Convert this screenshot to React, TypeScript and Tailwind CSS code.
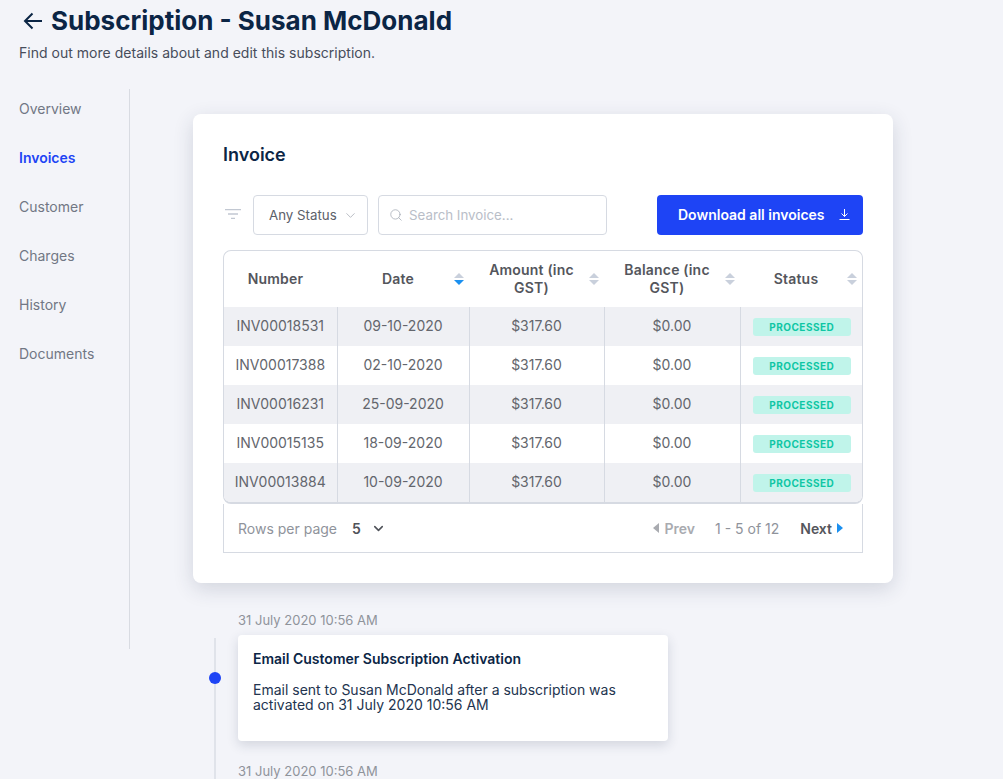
import { ChevronDown, Search } from "lucide-react";

const navItems = ["Overview", "Invoices", "Customer", "Charges", "History", "Documents"];

const invoices = [
  { number: "INV00018531", date: "09-10-2020" },
  { number: "INV00017388", date: "02-10-2020" },
  { number: "INV00016231", date: "25-09-2020" },
  { number: "INV00015135", date: "18-09-2020" },
  { number: "INV00013884", date: "10-09-2020" },
];

function SortIcon({ active }: { active?: boolean }) {
  return (
    <svg width="10" height="12" viewBox="0 0 10 12" className="absolute right-[5px] top-1/2 -translate-y-1/2">
      <path d="M5 0 L10 5 H0 Z" fill="#c9d0dc" />
      <path d="M0 7 H10 L5 12 Z" fill={active ? "#1b90f0" : "#c9d0dc"} />
    </svg>
  );
}

function HeaderCell({ label, sorted, sortable = true, w }: { label: React.ReactNode; sorted?: boolean; sortable?: boolean; w: string }) {
  return (
    <th className={`relative ${w} p-0 pr-[10px] text-center text-[14px] leading-[18px] tracking-[0.2px] font-semibold text-[#54565c]`}>
      {label}
      {sortable && <SortIcon active={sorted} />}
    </th>
  );
}

export default function App() {
  return (
    <div className="h-[779px] overflow-hidden bg-[#f3f4f9] font-['Inter',sans-serif]">
      <div className="pl-[19px] pt-[5px]">
        <div className="flex items-center h-[32px]">
          <svg width="19" height="18" viewBox="0 0 19 18" className="ml-[4px] mr-[9px]" fill="none" stroke="#0b2545" strokeWidth="2">
            <path d="M2 9 H19 M9.5 1.5 L2 9 L9.5 16.5" />
          </svg>
          <h1 className="text-[26px] leading-[32px] font-bold text-[#0b2545]">Subscription - Susan McDonald</h1>
        </div>
        <p className="mt-[7px] text-[14px] leading-[18px] tracking-[0.02px] text-[#474d5b]">Find out more details about and edit this subscription.</p>
      </div>

      <div className="flex mt-[27px]">
        <nav className="w-[130px] h-[560px] shrink-0 border-r border-[#d8dbe2] pl-[19px] pt-[11px] flex flex-col gap-[31px]">
          {navItems.map((item) => (
            <a key={item} className={`text-[14px] leading-[18px] ${item === "Invoices" ? "font-semibold text-[#1e44f5]" : "text-[#717784]"}`}>
              {item}
            </a>
          ))}
        </nav>

        <div className="pl-[63px] pt-[25px]">
          <section className="w-[700px] h-[469px] bg-white rounded-[8px] shadow-[0_6px_20px_rgba(40,50,80,0.16)] px-[30px] pt-[30px]">
            <h2 className="text-[18px] leading-[22px] font-semibold text-[#0b2545]">Invoice</h2>

            <div className="flex items-center mt-[29px] h-[40px]">
              <svg width="16" height="10" viewBox="0 0 16 10" className="ml-[2px] mr-[12px] mb-[2px]" fill="none" stroke="#c2c8d2" strokeWidth="1.3">
                <path d="M0 0.7 H16 M3 5 H13 M6 9.3 H10" />
              </svg>
              <div className="w-[115px] h-[40px] border border-[#d6dae2] rounded-[4px] flex items-center pl-[15px] text-[13.3px] text-[#5c6069]">
                <span className="pt-[1px]">Any Status</span>
                <ChevronDown size={15} strokeWidth={1.1} className="ml-[6px] text-[#9aa0ab]" />
              </div>
              <div className="ml-[10px] w-[229px] h-[40px] border border-[#d6dae2] rounded-[4px] flex items-center pl-[10px] text-[13.3px] text-[#b9bec8]">
                <Search size={14} strokeWidth={1.3} className="mr-[6px] text-[#a3a9b4]" />
                <span className="pt-[1px]">Search Invoice...</span>
              </div>
              <button className="ml-auto w-[206px] h-[40px] pl-[21px] pb-[1px] bg-[#1e44f5] rounded-[4px] flex items-center text-white text-[14px] font-semibold">
                Download all invoices
                <svg width="11" height="11" viewBox="0 0 11 11" className="ml-[14px]" fill="none" stroke="white" strokeWidth="1">
                  <path d="M5.5 0 V7.5 M2.5 4.5 L5.5 7.5 L8.5 4.5 M0.5 10.5 H10.5" />
                </svg>
              </button>
            </div>

            <div className="mt-[15px] border border-b-2 border-[#d6dae2] rounded-[8px] overflow-hidden">
              <table className="w-[638px] table-fixed border-collapse">
                <thead>
                  <tr className="h-[56px]">
                    <HeaderCell w="w-[113px]" label="Number" sortable={false} />
                    <HeaderCell w="w-[132px]" label="Date" sorted />
                    <HeaderCell w="w-[135px]" label={<>Amount (inc<br />GST)</>} />
                    <HeaderCell w="w-[136px]" label={<>Balance (inc<br />GST)</>} />
                    <HeaderCell w="w-[122px]" label="Status" />
                  </tr>
                </thead>
                <tbody>
                  {invoices.map((inv, i) => (
                    <tr key={inv.number} className={`h-[39px] text-[14px] text-[#63666d] text-center ${i % 2 === 0 ? "bg-[#eff0f4]" : "bg-white"}`}>
                      <td className="p-0 pb-[2px] border-r border-[#d6dae2]">{inv.number}</td>
                      <td className="p-0 pb-[2px] border-r border-[#d6dae2]">{inv.date}</td>
                      <td className="p-0 pb-[2px] border-r border-[#d6dae2]">$317.60</td>
                      <td className="p-0 pb-[2px] border-r border-[#d6dae2]">$0.00</td>
                      <td className="p-0">
                        <span className="ml-[12px] mr-[11px] pt-[1px] flex items-center justify-center h-[18px] rounded-[3px] bg-[#c0f4ea] text-[10px] tracking-[0.5px] font-bold text-[#0fc6a4]">
                          PROCESSED
                        </span>
                      </td>
                    </tr>
                  ))}
                </tbody>
              </table>
            </div>

            <div className="h-[49px] border border-t-0 border-[#d6dae2] flex items-center pl-[14px] pr-[19px] text-[14px] text-[#8f939b]">
              Rows per page
              <span className="ml-[15px] font-semibold text-[#4f5259]">5</span>
              <ChevronDown size={15} strokeWidth={2.5} className="ml-[10px] text-[#4f5259]" />
              <svg width="6" height="10" viewBox="0 0 6 10" className="ml-auto mr-[6px]"><path d="M6 0 V10 L0 5 Z" fill="#a9abb0" /></svg>
              <span className="font-semibold text-[#a9abb0]">Prev</span>
              <span className="ml-[20px]">1 - 5 of 12</span>
              <span className="ml-[21px] font-semibold text-[#54565c]">Next</span>
              <svg width="6" height="10" viewBox="0 0 6 10" className="ml-[5px]"><path d="M0 0 V10 L6 5 Z" fill="#1b90f0" /></svg>
            </div>
          </section>

          <div className="relative mt-[29px] ml-[45px]">
            <div className="absolute left-[-24px] top-[26px] w-[2px] h-[200px] bg-[#e0e3ea]" />
            <p className="text-[13px] leading-[16px] text-[#8f939b]">31 July 2020 10:56 AM</p>
            <div className="relative mt-[7px] w-[430px] h-[106px] bg-white rounded-[4px] shadow-[0_4px_12px_rgba(40,50,80,0.16)] px-[15px] pt-[15px]">
              <div className="absolute left-[-29px] top-[37px] w-[12px] h-[12px] rounded-full bg-[#1e44f5]" />
              <h3 className="text-[14px] leading-[18px] font-semibold text-[#0b2545]">Email Customer Subscription Activation</h3>
              <p className="mt-[14px] text-[14px] leading-[15px] text-[#23344f]">
                Email sent to Susan McDonald after a subscription was activated on 31 July 2020 10:56 AM
              </p>
            </div>
            <p className="mt-[22px] text-[13px] leading-[16px] text-[#8f939b]">31 July 2020 10:56 AM</p>
          </div>
        </div>
      </div>
    </div>
  );
}
